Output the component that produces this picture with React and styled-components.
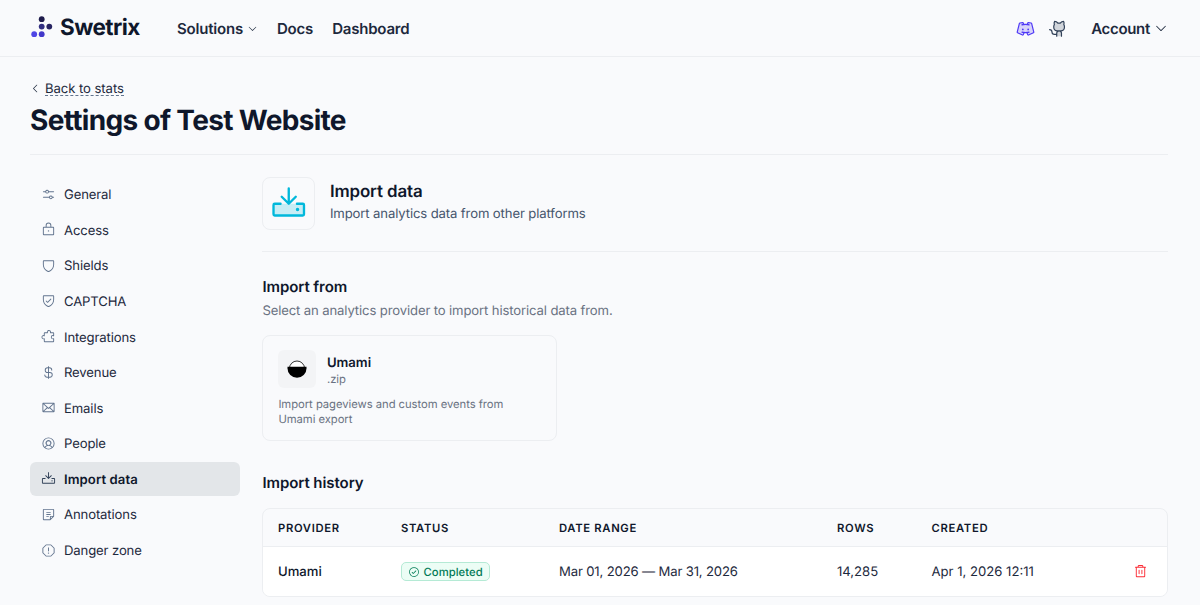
import React from 'react'
import styled, { createGlobalStyle } from 'styled-components'
import {
    PiSlidersHorizontal,
    PiLock,
    PiShield,
    PiShieldCheck,
    PiPuzzlePiece,
    PiCurrencyDollar,
    PiEnvelope,
    PiUserCircle,
    PiDownload,
    PiNote,
    PiWarningOctagon,
    PiDownloadDuotone,
    PiDiscordLogoDuotone,
    PiGithubLogoDuotone,
    PiCaretDown,
    PiCaretLeft,
    PiCheckCircle,
    PiTrash,
} from 'react-icons/pi'

const tabs = [
    { label: 'General', icon: PiSlidersHorizontal },
    { label: 'Access', icon: PiLock },
    { label: 'Shields', icon: PiShield },
    { label: 'CAPTCHA', icon: PiShieldCheck },
    { label: 'Integrations', icon: PiPuzzlePiece },
    { label: 'Revenue', icon: PiCurrencyDollar },
    { label: 'Emails', icon: PiEnvelope },
    { label: 'People', icon: PiUserCircle },
    { label: 'Import data', icon: PiDownload },
    { label: 'Annotations', icon: PiNote },
    { label: 'Danger zone', icon: PiWarningOctagon },
]

const imports = [
    {
        provider: 'Umami',
        status: 'Completed',
        range: 'Mar 01, 2026 — Mar 31, 2026',
        rows: '14,285',
        created: 'Apr 1, 2026 12:11',
    },
]

const SwetrixLogo = () => (
    <svg width='22' height='22' viewBox='0 0 22 22'>
        <circle cx='10.7' cy='3.2' r='2.9' fill='#1e1b4b' />
        <circle cx='10.7' cy='10.6' r='2.9' fill='#312e81' />
        <circle cx='18.3' cy='10.6' r='2.9' fill='#272361' />
        <circle cx='3.2' cy='18.2' r='2.9' fill='#4f46e5' />
        <circle cx='10.7' cy='18.2' r='2.9' fill='#4338ca' />
    </svg>
)

const UmamiLogo = () => (
    <svg width='20' height='20' viewBox='0 0 20 20'>
        <circle cx='10' cy='9.6' r='7.6' fill='#fff' stroke='#000' strokeWidth='0.8' />
        <path d='M0.5 7.7H19.5V9.5A9.5 9.2 0 0 1 0.5 9.5Z' fill='#000' />
    </svg>
)

const App = () => {
    const activeTab = 'Import data'

    return (
        <>
            <GlobalStyle />
            <Header>
                <Brand>
                    <SwetrixLogo />
                    <BrandName>Swetrix</BrandName>
                </Brand>
                <Nav>
                    <NavLink>Solutions <PiCaretDown size={11} /></NavLink>
                    <NavLink>Docs</NavLink>
                    <NavLink>Dashboard</NavLink>
                </Nav>
                <HeaderRight>
                    <SocialLink $color='#4f39f6'><PiDiscordLogoDuotone /></SocialLink>
                    <SocialLink $color='#314158'><PiGithubLogoDuotone /></SocialLink>
                    <Account>Account <PiCaretDown size={14} /></Account>
                </HeaderRight>
            </Header>
            <Page>
                <BackLink>
                    <PiCaretLeft size={11} />
                    <span>Back to stats</span>
                </BackLink>
                <Title>Settings of Test Website</Title>
                <Columns>
                    <Sidebar>
                        {tabs.map(({ label, icon: Icon }) => (
                            <Tab key={label} $active={label === activeTab}>
                                <Icon size={15} />
                                <span>{label}</span>
                            </Tab>
                        ))}
                    </Sidebar>
                    <Content>
                        <Intro>
                            <IntroIcon><PiDownloadDuotone size={37.5} /></IntroIcon>
                            <div>
                                <IntroTitle>Import data</IntroTitle>
                                <IntroText>Import analytics data from other platforms</IntroText>
                            </div>
                        </Intro>
                        <SectionTitle>Import from</SectionTitle>
                        <SectionText>Select an analytics provider to import historical data from.</SectionText>
                        <ProviderCard>
                            <ProviderTop>
                                <ProviderLogo><UmamiLogo /></ProviderLogo>
                                <div>
                                    <ProviderName>Umami</ProviderName>
                                    <ProviderFormat>.zip</ProviderFormat>
                                </div>
                            </ProviderTop>
                            <ProviderText>Import pageviews and custom events from Umami export</ProviderText>
                        </ProviderCard>
                        <HistoryTitle>Import history</HistoryTitle>
                        <Table>
                            <HeadRow>
                                <span>Provider</span>
                                <span>Status</span>
                                <span>Date range</span>
                                <span>Rows</span>
                                <span>Created</span>
                            </HeadRow>
                            {imports.map((item) => (
                                <Row key={item.created}>
                                    <Provider>{item.provider}</Provider>
                                    <div>
                                        <Badge>
                                            <PiCheckCircle size={12} />
                                            {item.status}
                                        </Badge>
                                    </div>
                                    <DateRange>{item.range}</DateRange>
                                    <span>{item.rows}</span>
                                    <span>{item.created}</span>
                                    <DeleteBtn><PiTrash size={15} /></DeleteBtn>
                                </Row>
                            ))}
                        </Table>
                    </Content>
                </Columns>
            </Page>
        </>
    )
}

export default App

const GlobalStyle = createGlobalStyle`
    * {
        box-sizing: border-box;
    }
    body {
        margin: 0;
        height: 605px;
        overflow: hidden;
        background-color: #f9fafc;
        color: #0f172b;
        font-family: Inter, sans-serif;
        font-size: 13.125px;
        text-rendering: geometricPrecision;
    }
    h1, h2, h3, p {
        margin: 0;
    }
    svg {
        display: block;
        flex-shrink: 0;
    }
`

const Header = styled.header`
    display: flex;
    align-items: center;
    height: 57px;
    padding: 0 32px 0 31px;
    border-bottom: 1px solid #eceef1;
`

const Brand = styled.div`
    display: flex;
    align-items: center;
    gap: 7px;
    width: 146px;
    padding-bottom: 3px;
`

const BrandName = styled.span`
    padding-top: 2px;
    font-size: 22.5px;
    font-weight: 700;
    line-height: 28px;
    letter-spacing: -0.55px;
`

const Nav = styled.nav`
    display: flex;
    gap: 19px;
    padding-top: 1px;
`

const NavLink = styled.a`
    display: flex;
    align-items: center;
    gap: 4px;
    font-size: 15px;
    font-weight: 600;
    line-height: 22px;
    letter-spacing: -0.2px;
    color: #1d293d;
`

const HeaderRight = styled.div`
    display: flex;
    align-items: center;
    margin-left: auto;
`

const SocialLink = styled.a`
    margin-right: 14px;
    font-size: 19px;
    color: ${({ $color }) => $color};
`

const Account = styled.div`
    display: flex;
    align-items: center;
    gap: 4px;
    margin-left: 9px;
    font-size: 15px;
    font-weight: 600;
    letter-spacing: -0.3px;
    color: #1d293d;
`

const Page = styled.main`
    padding: 22px 32px 0 30px;
`

const BackLink = styled.a`
    display: flex;
    gap: 4px;
    height: 19px;
    color: #1d293d;

    svg {
        margin-top: 4px;
    }

    span {
        height: 17px;
        line-height: 20px;
        letter-spacing: -0.07px;
        border-bottom: 1px dashed #62748e;
    }
`

const Title = styled.h1`
    height: 57px;
    padding-top: 4px;
    font-size: 28px;
    font-weight: 700;
    line-height: 36px;
    letter-spacing: -0.68px;
    border-bottom: 1px solid #eceef1;
`

const Columns = styled.div`
    display: flex;
    gap: 22.4px;
    padding-top: 22px;
`

const Sidebar = styled.aside`
    display: flex;
    flex-direction: column;
    gap: 1.9px;
    width: 210px;
    padding-top: 0.4px;
`

const Tab = styled.a`
    display: flex;
    align-items: center;
    gap: 8px;
    height: 33.7px;
    padding-left: 11px;
    border-radius: 6px;
    font-weight: ${({ $active }) => ($active ? 600 : 400)};
    letter-spacing: ${({ $active }) => ($active ? '0.08px' : '-0.13px')};
    color: ${({ $active }) => ($active ? '#0f172b' : '#1d293d')};
    background-color: ${({ $active }) => ($active ? '#e3e6e9' : 'transparent')};

    svg {
        color: ${({ $active }) => ($active ? '#314158' : '#62748e')};
    }

    span {
        padding-top: 2px;
    }
`

const Content = styled.section`
    flex: 1;
    min-width: 0;
`

const Intro = styled.div`
    display: flex;
    gap: 15px;
    height: 75px;
    border-bottom: 1px solid #eceef1;
`

const IntroIcon = styled.div`
    display: flex;
    align-items: center;
    justify-content: center;
    width: 52.5px;
    height: 52.5px;
    border: 1px solid #eceef1;
    border-radius: 8px;
    color: #00b8db;
`

const IntroTitle = styled.h2`
    padding-top: 3px;
    font-size: 16.9px;
    font-weight: 600;
    line-height: 24px;
    letter-spacing: -0.12px;
`

const IntroText = styled.p`
    padding-top: 1px;
    line-height: 19px;
    letter-spacing: -0.12px;
    color: #45556c;
`

const SectionTitle = styled.h3`
    margin-top: 23px;
    font-size: 15px;
    font-weight: 600;
    line-height: 23px;
    letter-spacing: -0.07px;
`

const SectionText = styled.p`
    margin-top: 4px;
    line-height: 19px;
    letter-spacing: -0.13px;
    color: #6a7282;
`

const ProviderCard = styled.div`
    width: 295px;
    height: 106px;
    margin-top: 14px;
    padding: 14px 15px;
    border: 1px solid #eceef1;
    border-radius: 8px;
`

const ProviderTop = styled.div`
    display: flex;
    align-items: center;
    gap: 11px;
    height: 37.5px;
`

const ProviderLogo = styled.div`
    display: flex;
    align-items: center;
    justify-content: center;
    width: 37.5px;
    height: 37.5px;
    border-radius: 6px;
    background-color: #f3f4f6;
`

const ProviderName = styled.div`
    padding-top: 3px;
    font-weight: 600;
    line-height: 18px;
`

const ProviderFormat = styled.div`
    font-size: 11.25px;
    line-height: 15px;
    color: #6a7282;
`

const ProviderText = styled.p`
    margin-top: 9px;
    font-size: 11.25px;
    line-height: 15px;
    letter-spacing: -0.04px;
    color: #6a7282;
`

const HistoryTitle = styled.h3`
    margin-top: 30px;
    font-size: 15px;
    font-weight: 600;
    line-height: 23px;
    letter-spacing: -0.07px;
`

const Table = styled.div`
    margin-top: 14px;
    border: 1px solid #eceef1;
    border-radius: 8px;
    overflow: hidden;
`

const HeadRow = styled.div`
    display: grid;
    grid-template-columns: 123px 158px 278px 94.5px 1fr 30px;
    align-items: center;
    height: 38px;
    padding: 1px 12px 0 14.6px;
    border-bottom: 1px solid #eceef1;
    font-size: 11.25px;
    font-weight: 600;
    letter-spacing: 0.67px;
    text-transform: uppercase;
`

const Row = styled(HeadRow)`
    height: 49px;
    border-bottom: none;
    font-size: 13.125px;
    font-weight: 400;
    letter-spacing: normal;
    text-transform: none;
    color: #1d293d;
    background-color: #fff;
`

const Provider = styled.span`
    font-weight: 500;
    color: #0f172b;
`

const DateRange = styled.span`
    letter-spacing: -0.15px;
`

const Badge = styled.span`
    display: inline-flex;
    align-items: center;
    gap: 3.5px;
    height: 19px;
    padding: 0 6px;
    border: 1px solid #b5ead5;
    border-radius: 5px;
    font-size: 11.25px;
    font-weight: 500;
    letter-spacing: 0.05px;
    color: #007a55;
    background-color: #ecfdf5;
`

const DeleteBtn = styled.button`
    display: flex;
    justify-content: center;
    padding: 0 0 2px;
    border: none;
    color: #fb2c36;
    background: none;
`
